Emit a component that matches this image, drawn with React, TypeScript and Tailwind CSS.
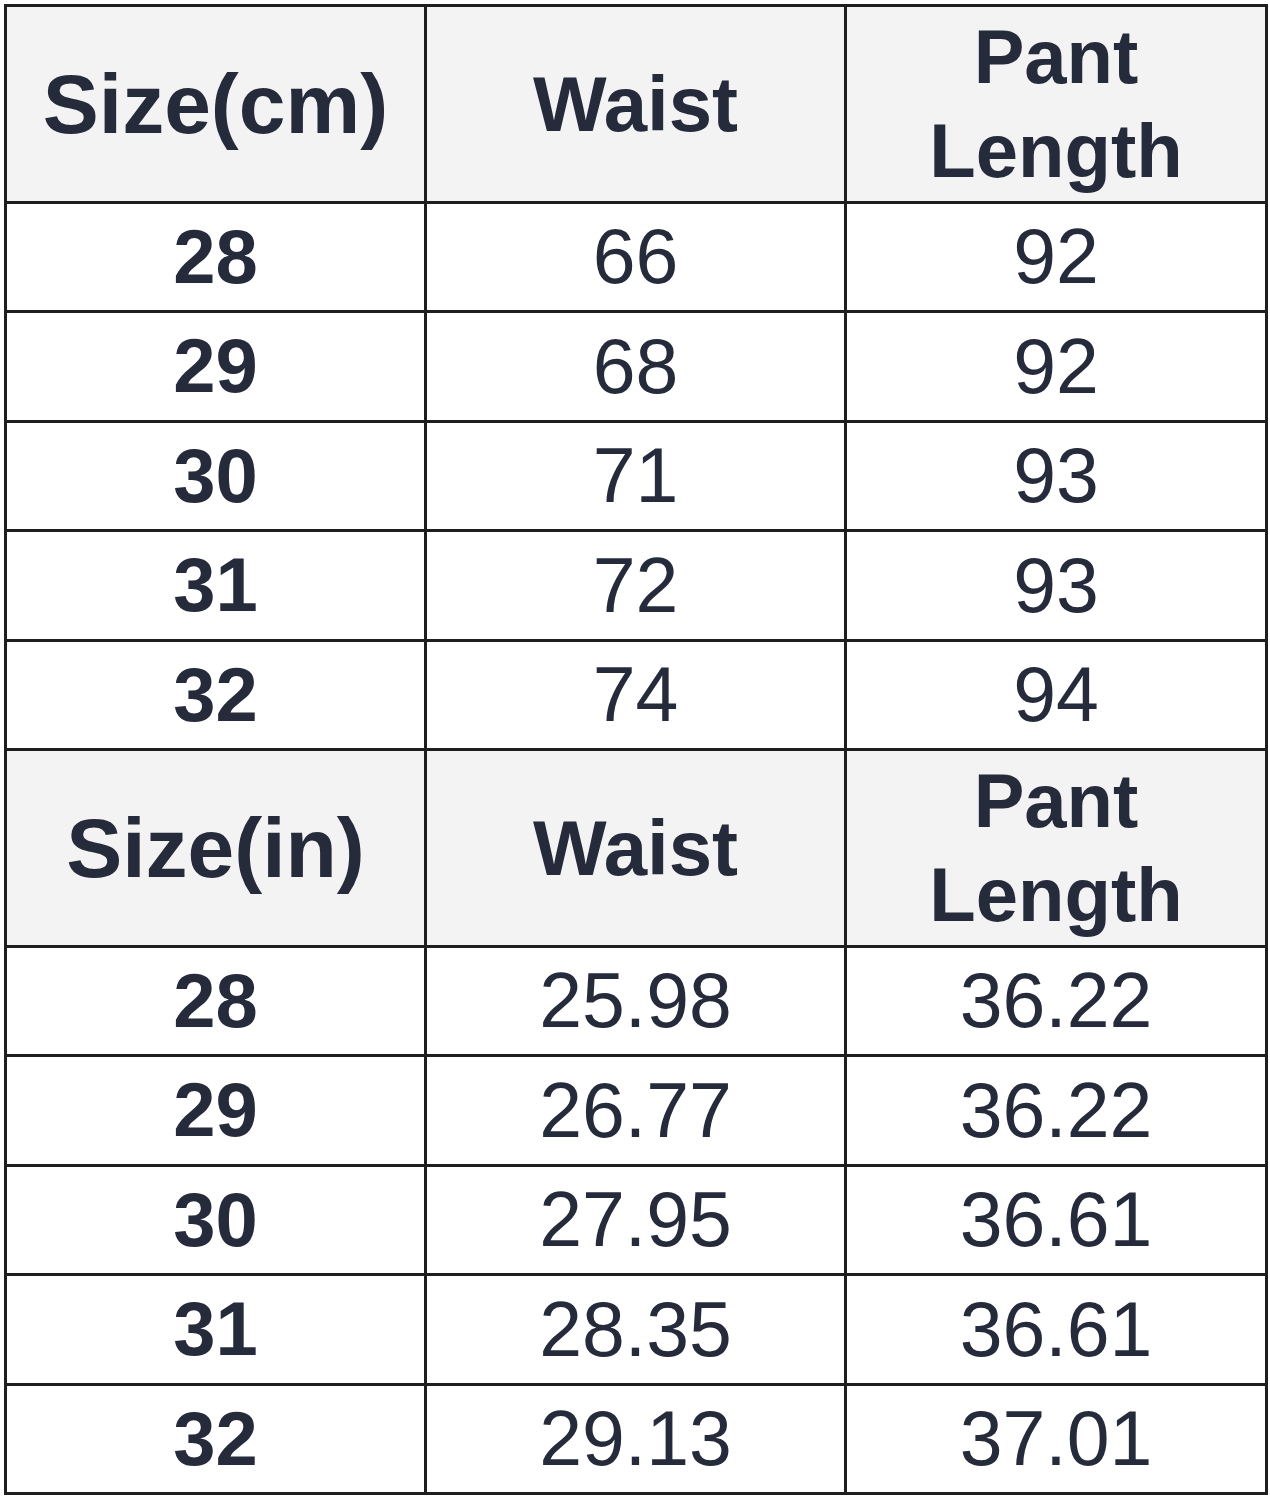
const cmRows = [
  ['28', '66', '92'],
  ['29', '68', '92'],
  ['30', '71', '93'],
  ['31', '72', '93'],
  ['32', '74', '94'],
];

const inRows = [
  ['28', '25.98', '36.22'],
  ['29', '26.77', '36.22'],
  ['30', '27.95', '36.61'],
  ['31', '28.35', '36.61'],
  ['32', '29.13', '37.01'],
];

function HeaderRow({ unit }: { unit: string }) {
  return (
    <tr className="h-[196.5px] bg-[#f3f3f3]">
      <th className="border-[3px] border-[#1e1e1e] p-0 text-[84px] font-bold leading-none">{unit}</th>
      <th className="border-[3px] border-[#1e1e1e] p-0 text-[78px] font-bold leading-none">Waist</th>
      <th className="border-[3px] border-[#1e1e1e] p-0 text-[76px] font-bold leading-[94px]">
        Pant
        <br />
        Length
      </th>
    </tr>
  );
}

function DataRow({ row }: { row: string[] }) {
  return (
    <tr className="h-[109.5px] bg-white">
      <td className="border-[3px] border-[#1e1e1e] p-0 text-[76px] font-bold leading-none">{row[0]}</td>
      <td className="border-[3px] border-[#1e1e1e] p-0 text-[77px] leading-none">{row[1]}</td>
      <td className="border-[3px] border-[#1e1e1e] p-0 text-[77px] leading-none">{row[2]}</td>
    </tr>
  );
}

export default function App() {
  return (
    <div className="min-h-[1500px] w-[1270px] bg-white pl-[4px] pt-[4px]">
      <table
        className="w-[1261px] table-fixed border-collapse border-[3px] border-[#1e1e1e] text-center text-[#262b3b]"
        style={{ fontFamily: '"Liberation Sans", Arial, sans-serif' }}
      >
        <colgroup>
          <col className="w-[420px]" />
          <col className="w-[420px]" />
          <col className="w-[421px]" />
        </colgroup>
        <tbody>
          <HeaderRow unit="Size(cm)" />
          {cmRows.map((r) => (
            <DataRow key={'cm' + r[0]} row={r} />
          ))}
          <HeaderRow unit="Size(in)" />
          {inRows.map((r) => (
            <DataRow key={'in' + r[0]} row={r} />
          ))}
        </tbody>
      </table>
    </div>
  );
}
